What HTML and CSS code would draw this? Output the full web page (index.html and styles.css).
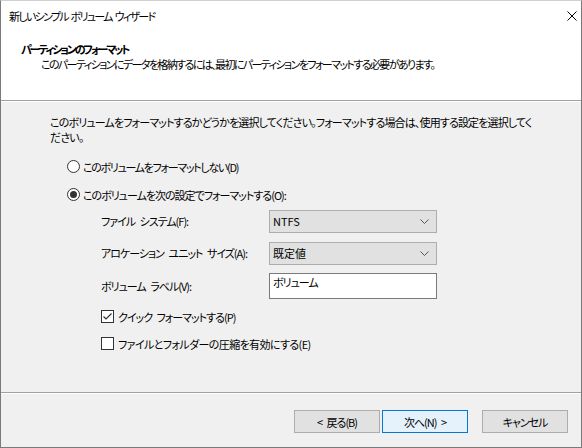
FILE: index.html
```html
<!DOCTYPE html>
<html lang="ja">
<head>
<meta charset="utf-8">
<link rel="stylesheet" href="styles.css">
</head>
<body>
<div class="window">
  <div class="titlebar">
    <span class="title">新しいシンプル ボリューム ウィザード</span>
    <svg class="close" width="10" height="10" viewBox="0 0 10 10"><path d="M0.5 0.5 L9.5 9.5 M9.5 0.5 L0.5 9.5" stroke="#000" stroke-width="1" fill="none"/></svg>
  </div>
  <div class="header">
    <div class="h-title">パーティションのフォーマット</div>
    <div class="h-sub">このパーティションにデータを格納するには、最初にパーティションをフォーマットする必要があります。</div>
  </div>
  <div class="content">
    <p class="intro">このボリュームをフォーマットするかどうかを選択してください。フォーマットする場合は、使用する設定を選択してく<br>ださい。</p>
    <div class="radio-row r1"><span class="radio"></span><span class="t-r1">このボリュームをフォーマットしない(D)</span></div>
    <div class="radio-row r2"><span class="radio checked"></span><span>このボリュームを次の設定でフォーマットする(O):</span></div>
    <div class="form">
      <div class="frow f1"><span class="lbl">ファイル システム(F):</span><div class="combo"><span>NTFS</span><svg width="9" height="5" viewBox="0 0 9 5"><path d="M0.5 0.5 L4.5 4.5 L8.5 0.5" stroke="#555" fill="none"/></svg></div></div>
      <div class="frow f2"><span class="lbl">アロケーション ユニット サイズ(A):</span><div class="combo"><span>既定値</span><svg width="9" height="5" viewBox="0 0 9 5"><path d="M0.5 0.5 L4.5 4.5 L8.5 0.5" stroke="#555" fill="none"/></svg></div></div>
      <div class="frow f3"><span class="lbl">ボリューム ラベル(V):</span><div class="textbox">ボリューム</div></div>
      <div class="check-row c1"><span class="check checked"><svg width="11" height="11" viewBox="0 0 11 11"><path d="M1.5 5.5 L4 8 L9.5 2.5" stroke="#333" stroke-width="1.2" fill="none"/></svg></span><span>クイック フォーマットする(P)</span></div>
      <div class="check-row c2"><span class="check"></span><span class="t-c2">ファイルとフォルダーの圧縮を有効にする(E)</span></div>
    </div>
  </div>
  <div class="footer">
    <button class="btn">&lt; 戻る(B)</button>
    <button class="btn default">次へ(N) &gt;</button>
    <button class="btn cancel">キャンセル</button>
  </div>
</div>
</body>
</html>
```

FILE: styles.css
```css
* { box-sizing: border-box; }
html, body { margin: 0; padding: 0; }
body {
  width: 582px; height: 448px; overflow: hidden;
  font-family: "Noto Sans CJK JP", "Noto Sans", sans-serif;
  font-size: 11px;
  letter-spacing: -1px;
  word-spacing: 3px;
  font-feature-settings: "palt";
  color: #000;
  background: #fff;
  white-space: nowrap;
}
.window {
  width: 582px; height: 448px;
  border: 1px solid #7a7a7a;
  border-top-color: #d0d0d0;
  display: flex; flex-direction: column;
  background: #f0f0f0;
}
.titlebar {
  height: 30px; background: #fff;
  display: flex; align-items: center; justify-content: space-between;
  padding: 0 2px 0 8px;
}
.title { letter-spacing: -1.7px; word-spacing: 2px; }
.close { margin-right: 2px; }
.header {
  height: 70px; background: #fff;
  border-bottom: 1px solid #a0a0a0;
  box-shadow: 0 1px 0 #fff;
  padding: 11px 0 0 20px;
  line-height: 15px;
}
.h-title { font-weight: bold; letter-spacing: -2.2px; }
.h-sub { padding-left: 20px; letter-spacing: -1.6px; }
.content {
  flex: 1; padding: 14px 0 0 49px;
  border-bottom: 1px solid #a0a0a0;
  box-shadow: 0 1px 0 #fff;
}
.intro { margin: 0; line-height: 15px; letter-spacing: -0.85px; }
.radio-row { display: flex; align-items: center; height: 15px; margin-left: 17px; }
.r1 { margin-top: 14px; }
.r2 { margin-top: 13px; }
.t-r1 { letter-spacing: -1.3px; }
.radio {
  width: 13px; height: 13px; border: 1px solid #333; border-radius: 50%;
  background: #fff; margin-right: 3px; position: relative; flex: none;
}
.radio.checked::after {
  content: ""; position: absolute; left: 2px; top: 2px;
  width: 7px; height: 7px; border-radius: 50%; background: #333;
}
.form { margin-left: 51px; margin-top: 7px; }
.frow { display: flex; align-items: center; height: 24px; }
.f2 { margin-top: 8px; }
.f3 { margin-top: 8px; height: 26px; }
.lbl { width: 168px; }
.combo {
  width: 168px; height: 23px; background: #e1e1e1; border: 1px solid #adadad;
  display: flex; align-items: center; justify-content: space-between;
  padding: 0 7px 0 3px;
}
.combo span { letter-spacing: 0; }
.textbox {
  width: 168px; height: 26px; background: #fff; border: 1px solid #7a7a7a;
  padding: 1px 3px; align-self: flex-start; line-height: 15px;
}
.check-row { display: flex; align-items: center; height: 15px; }
.c1 { margin-top: 10px; }
.c2 { margin-top: 12px; }
.t-c2 { letter-spacing: -0.6px; }
.check {
  width: 13px; height: 13px; border: 1px solid #333; background: #fff; flex: none;
  margin-right: 4px; display: flex; align-items: center; justify-content: center;
}
.footer {
  height: 54px; display: flex; align-items: flex-start;
  padding: 17px 0 0 293px;
}
.btn {
  width: 86px; height: 23px; background: #e1e1e1; border: 1px solid #adadad;
  font: inherit; padding: 0; color: #000; letter-spacing: inherit; word-spacing: inherit;
}
.btn.default { margin-left: 2px; background: #e5f1fb; border: 1px solid #0078d7; }
.btn.cancel { margin-left: 14px; }
```
